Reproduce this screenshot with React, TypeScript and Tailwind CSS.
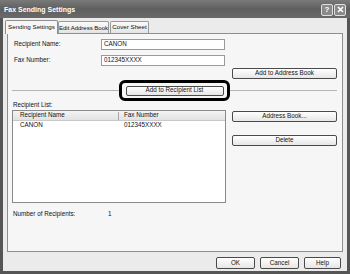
import React from "react";

const font = { fontFamily: '"Liberation Sans", Arial, sans-serif' };

function Btn({ label, className = "" }: { label: string; className?: string }) {
  return (
    <div
      className={`flex items-center justify-center whitespace-nowrap rounded-[2px] border border-[#4a4a4a] bg-gradient-to-b from-[#ffffff] to-[#e6e6e6] text-[6.3px] leading-none text-[#111] ${className}`}
    >
      {label}
    </div>
  );
}

export default function App() {
  return (
    <div
      className="flex h-[274px] w-[350px] flex-col whitespace-nowrap bg-[#555] px-[3px] pb-[3px]"
      style={font}
    >
      {/* Title bar */}
      <div className="-mx-[3px] flex h-[18px] items-center justify-between bg-gradient-to-b from-[#7a7a7a] via-[#5f5f5f] to-[#6a6a6a] pl-[4px] pr-[4px]">
        <span className="text-[7px] font-bold leading-none text-white">Fax Sending Settings</span>
        <div className="flex gap-[1px] pt-[1px]">
          <div className="flex h-[12px] w-[12px] items-center justify-center rounded-[2px] border border-[#e0e0e0] bg-[#8a8a8a] text-[8px] font-bold leading-none text-white">
            ?
          </div>
          <div className="flex h-[12px] w-[12px] items-center justify-center rounded-[2px] border border-[#e0e0e0] bg-[#8a8a8a]">
            <svg width="7" height="7" viewBox="0 0 7 7">
              <path d="M1 1 L6 6 M6 1 L1 6" stroke="white" strokeWidth="1.6" />
            </svg>
          </div>
        </div>
      </div>

      {/* Body */}
      <div className="flex flex-1 flex-col bg-[#ebebeb] px-[4px]">
        {/* Tabs */}
        <div className="mt-[2px] flex h-[13px] items-end">
          <div className="relative z-10 -mb-[1px] -ml-[2px] flex h-[14px] w-[53px] items-center justify-center rounded-t-[2px] border border-b-0 border-[#8e8e8e] bg-[#f6f6f6] text-[6.2px] leading-none text-[#111]">
            Sending Settings
          </div>
          <div className="flex h-[12px] w-[51px] items-center justify-center rounded-t-[2px] border border-b-0 border-[#9a9a9a] bg-gradient-to-b from-[#fafafa] to-[#e4e4e4] text-[6px] leading-none text-[#111]">
            Edit Address Book
          </div>
          <div className="ml-[1px] flex h-[12px] w-[39px] items-center justify-center rounded-t-[2px] border border-b-0 border-[#9a9a9a] bg-gradient-to-b from-[#fafafa] to-[#e4e4e4] text-[6.2px] leading-none text-[#111]">
            Cover Sheet
          </div>
        </div>

        {/* Panel */}
        <div className="flex h-[219px] flex-col border border-[#8e8e8e] bg-[#f6f6f6] pl-[4px] pr-[5px] text-[6.3px] leading-none text-[#111]">
          <div className="mt-[5px] flex h-[11px] items-center">
            <span className="ml-[2px] w-[87px]">Recipient Name:</span>
            <div className="flex h-[11px] w-[124px] items-center border border-[#9a9a9a] bg-white pl-[2px]">CANON</div>
          </div>
          <div className="mt-[5px] flex h-[11px] items-center">
            <span className="ml-[2px] w-[87px]">Fax Number:</span>
            <div className="flex h-[11px] w-[124px] items-center border border-[#9a9a9a] bg-white pl-[2px]">012345XXXX</div>
          </div>
          <div className="mt-[2px] flex justify-end">
            <Btn label="Add to Address Book" className="h-[11px] w-[105px]" />
          </div>

          {/* separator with highlighted button */}
          <div className="mt-[1px] flex h-[21px] items-center">
            <div className="h-[1px] flex-1 bg-[#b5b5b5]" />
            <div className="flex h-[21px] w-[111px] items-center justify-center rounded-[6px] border-[3px] border-black">
              <Btn label="Add to Recipient List" className="h-[10px] w-[98px]" />
            </div>
            <div className="h-[1px] flex-1 bg-[#b5b5b5]" />
          </div>

          <div className="ml-[1px] flex h-[8px] items-center">Recipient List:</div>

          <div className="mt-[1px] flex justify-between">
            <div className="flex h-[93px] w-[214px] flex-col border border-[#8a8a8a] bg-white">
              <div className="flex h-[10px] items-center border-b border-[#c8c8c8] bg-gradient-to-b from-[#f4f4f4] to-[#e2e2e2]">
                <span className="w-[105px] pl-[7px]">Recipient Name</span>
                <div className="h-[8px] w-[1px] bg-[#a8a8a8]" />
                <span className="pl-[5px]">Fax Number</span>
              </div>
              <div className="flex h-[9px] items-center">
                <span className="w-[106px] pl-[7px]">CANON</span>
                <span className="pl-[5px]">012345XXXX</span>
              </div>
            </div>
            <div className="flex w-[105px] flex-col">
              <Btn label="Address Book..." className="mt-[1px] h-[11px] w-[105px]" />
              <Btn label="Delete" className="mt-[13px] h-[11px] w-[105px]" />
            </div>
          </div>

          <div className="mt-[7px] flex h-[8px] items-center">
            <span className="ml-[1px] w-[95px]">Number of Recipients:</span>
            <span>1</span>
          </div>
        </div>

        {/* Bottom buttons */}
        <div className="mt-[5px] flex justify-end gap-[5px] pr-[2px]">
          <Btn label="OK" className="h-[12px] w-[39px]" />
          <Btn label="Cancel" className="h-[12px] w-[39px]" />
          <Btn label="Help" className="h-[12px] w-[37px]" />
        </div>
      </div>
    </div>
  );
}
